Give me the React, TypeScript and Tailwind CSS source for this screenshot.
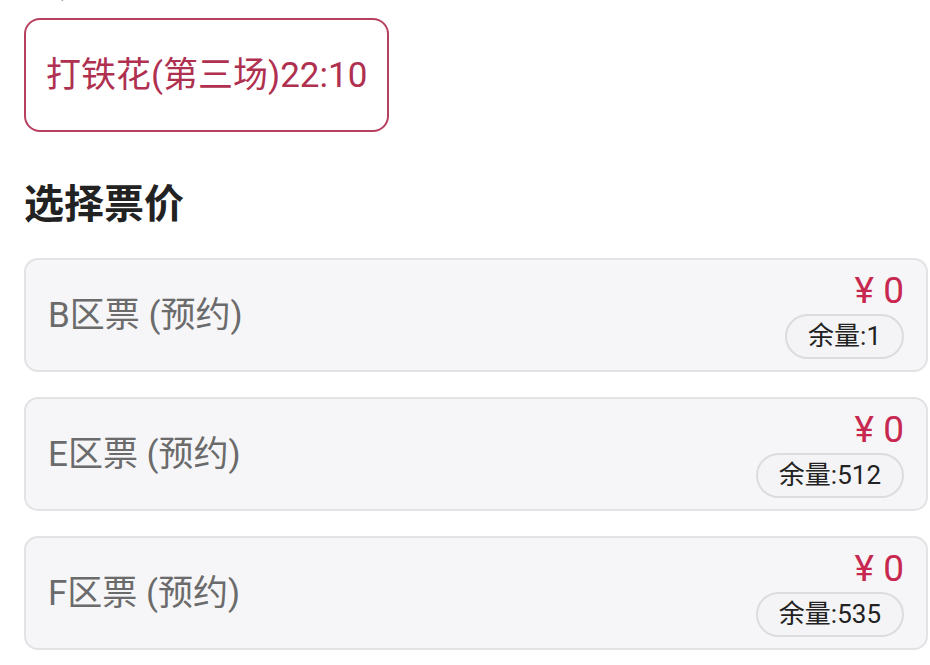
const font = { fontFamily: "Roboto, 'Noto Sans CJK SC', sans-serif" };

type Ticket = {
  id: string;
  name: string;
  price: number;
  stock: number;
};

const tickets: Ticket[] = [
  { id: "b", name: "B区票 (预约)", price: 0, stock: 1 },
  { id: "e", name: "E区票 (预约)", price: 0, stock: 512 },
  { id: "f", name: "F区票 (预约)", price: 0, stock: 535 },
];

const TicketCard = ({ ticket }: { ticket: Ticket }) => (
  <div className="flex h-[114px] items-center justify-between rounded-[14px] border-2 border-[#e3e3e6] bg-[#f6f6f8] pl-[22px] pr-[22px]">
    <span className="text-[35px] leading-none text-[#6b6b6b]">{ticket.name}</span>
    <div className="flex flex-col items-end gap-[3px]">
      <span className="text-[37px] leading-[40px] text-[#c8284f]">¥ {ticket.price}</span>
      <span className="rounded-full border-2 border-[#dcdcdf] bg-[#f4f4f6] px-[21px] text-[26px] leading-[41px] text-[#222]">
        余量:{ticket.stock}
      </span>
    </div>
  </div>
);

export default function App() {
  return (
    <div className="min-h-[665px] w-[930px] overflow-hidden bg-white" style={font}>
      {/* 上一段的标题，只露出底部 */}
      <div className="-mt-[37px] pl-[14px] text-[36px] font-bold leading-[44px] text-[#222]">场次</div>

      <div className="pl-[24px] pr-[2px]">
        {/* 场次选择 */}
        <div className="mt-[11px] inline-flex h-[114px] items-center rounded-[16px] border-2 border-[#b8405f] px-[20px]">
          <span className="text-[35px] leading-none text-[#b0304f]">打铁花(第三场)22:10</span>
        </div>

        {/* 票价 */}
        <h2 className="mt-[49px] text-[40px] font-bold leading-[48px] text-[#222]">选择票价</h2>

        <div className="mt-[29px] flex flex-col gap-[25px]">
          {tickets.map((ticket) => (
            <TicketCard key={ticket.id} ticket={ticket} />
          ))}
        </div>
      </div>
    </div>
  );
}
